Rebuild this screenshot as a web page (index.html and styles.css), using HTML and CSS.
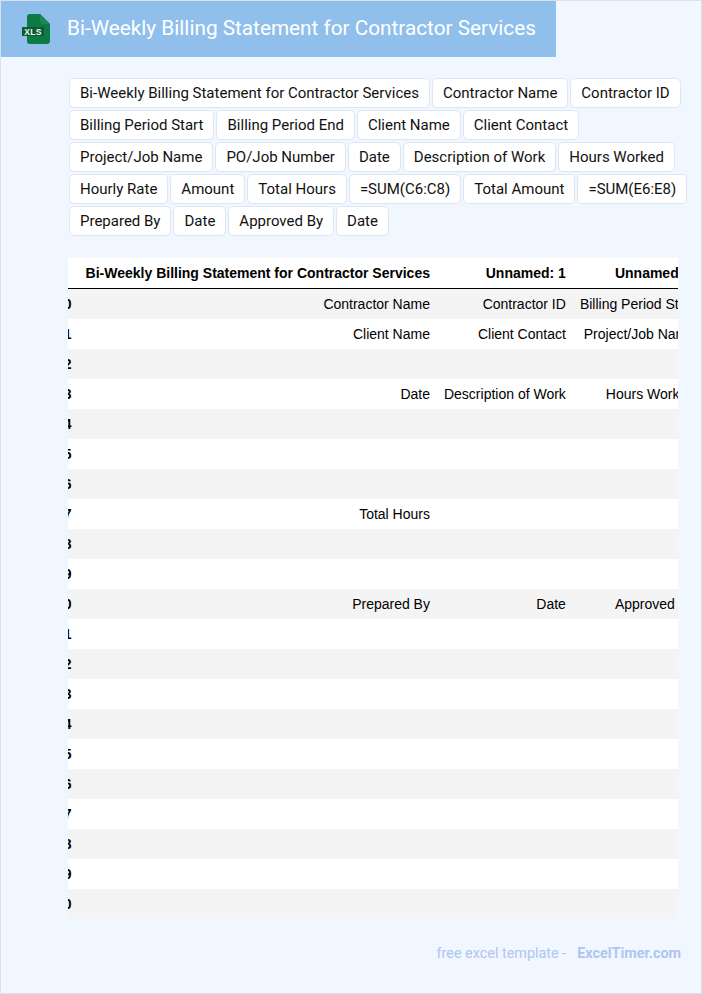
FILE: index.html
```html
<!DOCTYPE html>
<html lang="en">
<head>
<meta charset="utf-8">
<title>Bi-Weekly Billing Statement for Contractor Services</title>
<link rel="stylesheet" href="styles.css">
</head>
<body>
<div class="page">
  <header class="banner">
    <svg class="file-icon" width="30" height="30" viewBox="0 0 30 30" aria-hidden="true">
      <path d="M9 0H19L29 10V27a3 3 0 0 1-3 3H9a3 3 0 0 1-3-3V3a3 3 0 0 1 3-3Z" fill="#0b7a43"/>
      <path d="M19 0L29 10H22a3 3 0 0 1-3-3Z" fill="#1f8753"/>
      <rect x="1" y="13" width="22" height="9" fill="#0a5c35"/>
      <text x="12" y="20.6" class="file-icon-text" text-anchor="middle">XLS</text>
    </svg>
    <h1 class="title">Bi-Weekly Billing Statement for Contractor Services</h1>
  </header>
  <main class="content">
    <div class="chips">
      <span class="chip">Bi-Weekly Billing Statement for Contractor Services</span>
      <span class="chip">Contractor Name</span>
      <span class="chip">Contractor ID</span>
      <span class="chip">Billing Period Start</span>
      <span class="chip">Billing Period End</span>
      <span class="chip">Client Name</span>
      <span class="chip">Client Contact</span>
      <span class="chip">Project/Job Name</span>
      <span class="chip">PO/Job Number</span>
      <span class="chip">Date</span>
      <span class="chip">Description of Work</span>
      <span class="chip">Hours Worked</span>
      <span class="chip">Hourly Rate</span>
      <span class="chip">Amount</span>
      <span class="chip">Total Hours</span>
      <span class="chip">=SUM(C6:C8)</span>
      <span class="chip">Total Amount</span>
      <span class="chip">=SUM(E6:E8)</span>
      <span class="chip">Prepared By</span>
      <span class="chip">Date</span>
      <span class="chip">Approved By</span>
      <span class="chip">Date</span>
    </div>
    <div class="table-wrap">
      <table class="sheet">
        <thead>
          <tr><th></th><th>Bi-Weekly Billing Statement for Contractor Services</th><th>Unnamed: 1</th><th>Unnamed: 2</th></tr>
        </thead>
        <tbody>
          <tr><th>0</th><td>Contractor Name</td><td>Contractor ID</td><td>Billing Period Start</td></tr>
          <tr><th>1</th><td>Client Name</td><td>Client Contact</td><td>Project/Job Name</td></tr>
          <tr><th>2</th><td></td><td></td><td></td></tr>
          <tr><th>3</th><td>Date</td><td>Description of Work</td><td>Hours Worked</td></tr>
          <tr><th>4</th><td></td><td></td><td></td></tr>
          <tr><th>5</th><td></td><td></td><td></td></tr>
          <tr><th>6</th><td></td><td></td><td></td></tr>
          <tr><th>7</th><td>Total Hours</td><td></td><td></td></tr>
          <tr><th>8</th><td></td><td></td><td></td></tr>
          <tr><th>9</th><td></td><td></td><td></td></tr>
          <tr><th>10</th><td>Prepared By</td><td>Date</td><td>Approved By</td></tr>
          <tr><th>11</th><td></td><td></td><td></td></tr>
          <tr><th>12</th><td></td><td></td><td></td></tr>
          <tr><th>13</th><td></td><td></td><td></td></tr>
          <tr><th>14</th><td></td><td></td><td></td></tr>
          <tr><th>15</th><td></td><td></td><td></td></tr>
          <tr><th>16</th><td></td><td></td><td></td></tr>
          <tr><th>17</th><td></td><td></td><td></td></tr>
          <tr><th>18</th><td></td><td></td><td></td></tr>
          <tr><th>19</th><td></td><td></td><td></td></tr>
          <tr><th>20</th><td></td><td></td><td></td></tr>
        </tbody>
      </table>
    </div>
  </main>
  <footer class="credit">
    <span class="credit-text">free excel template -</span>
    <span class="credit-link">ExcelTimer.com</span>
  </footer>
</div>
</body>
</html>
```
FILE: styles.css
```css
html, body {
  margin: 0;
  padding: 0;
}
body {
  font-family: Roboto, sans-serif;
  background: #f0f7ff;
}
.page {
  box-sizing: border-box;
  width: 702px;
  height: 994px;
  border: 1px solid #d8e2ee;
  background: #f0f7ff;
  display: flex;
  flex-direction: column;
}
.banner {
  width: 555px;
  height: 56px;
  background: #90bfec;
  display: flex;
  align-items: center;
  padding-left: 20px;
  box-sizing: border-box;
  flex: none;
}
.file-icon {
  flex: none;
  margin-right: 16px;
}
.file-icon-text {
  font-family: "Liberation Sans", sans-serif;
  font-size: 8.5px;
  font-weight: 700;
  letter-spacing: 0.4px;
  fill: #f2f8f4;
}
.title {
  margin: 0 0 2px;
  font-size: 20.75px;
  font-weight: 400;
  color: #ffffff;
  white-space: nowrap;
}
.content {
  padding: 21px 22px 0 67px;
  flex: none;
}
.chips {
  display: flex;
  flex-wrap: wrap;
  gap: 2px;
  margin: 0 -10px 0 1px;
}
.chip {
  box-sizing: border-box;
  height: 30px;
  padding: 0 10px;
  display: flex;
  align-items: center;
  background: #ffffff;
  border: 1px solid #dde6f2;
  border-radius: 5px;
  font-size: 15px;
  color: #111111;
  white-space: nowrap;
}
.table-wrap {
  margin-top: 22px;
  width: 610px;
  overflow: hidden;
  background: #ffffff;
}
.sheet {
  border-collapse: separate;
  border-spacing: 0;
  margin-left: -19px;
  font-family: Arial, "Liberation Sans", sans-serif;
  font-size: 14px;
  color: #000000;
  white-space: nowrap;
}
.sheet th,
.sheet td {
  height: 30px;
  padding: 0 7px;
  text-align: right;
  box-sizing: border-box;
}
.sheet thead th {
  height: 31px;
  border-bottom: 1px solid #000000;
}
.sheet tbody tr:nth-child(odd) {
  background: #f4f4f4;
}
.sheet tbody th {
  font-weight: 700;
}
.credit {
  margin-top: 26px;
  padding-right: 20px;
  display: flex;
  justify-content: flex-end;
  gap: 11px;
  font-size: 14.4px;
  color: #b0c4f2;
}
.credit-link {
  font-weight: 700;
}
```
